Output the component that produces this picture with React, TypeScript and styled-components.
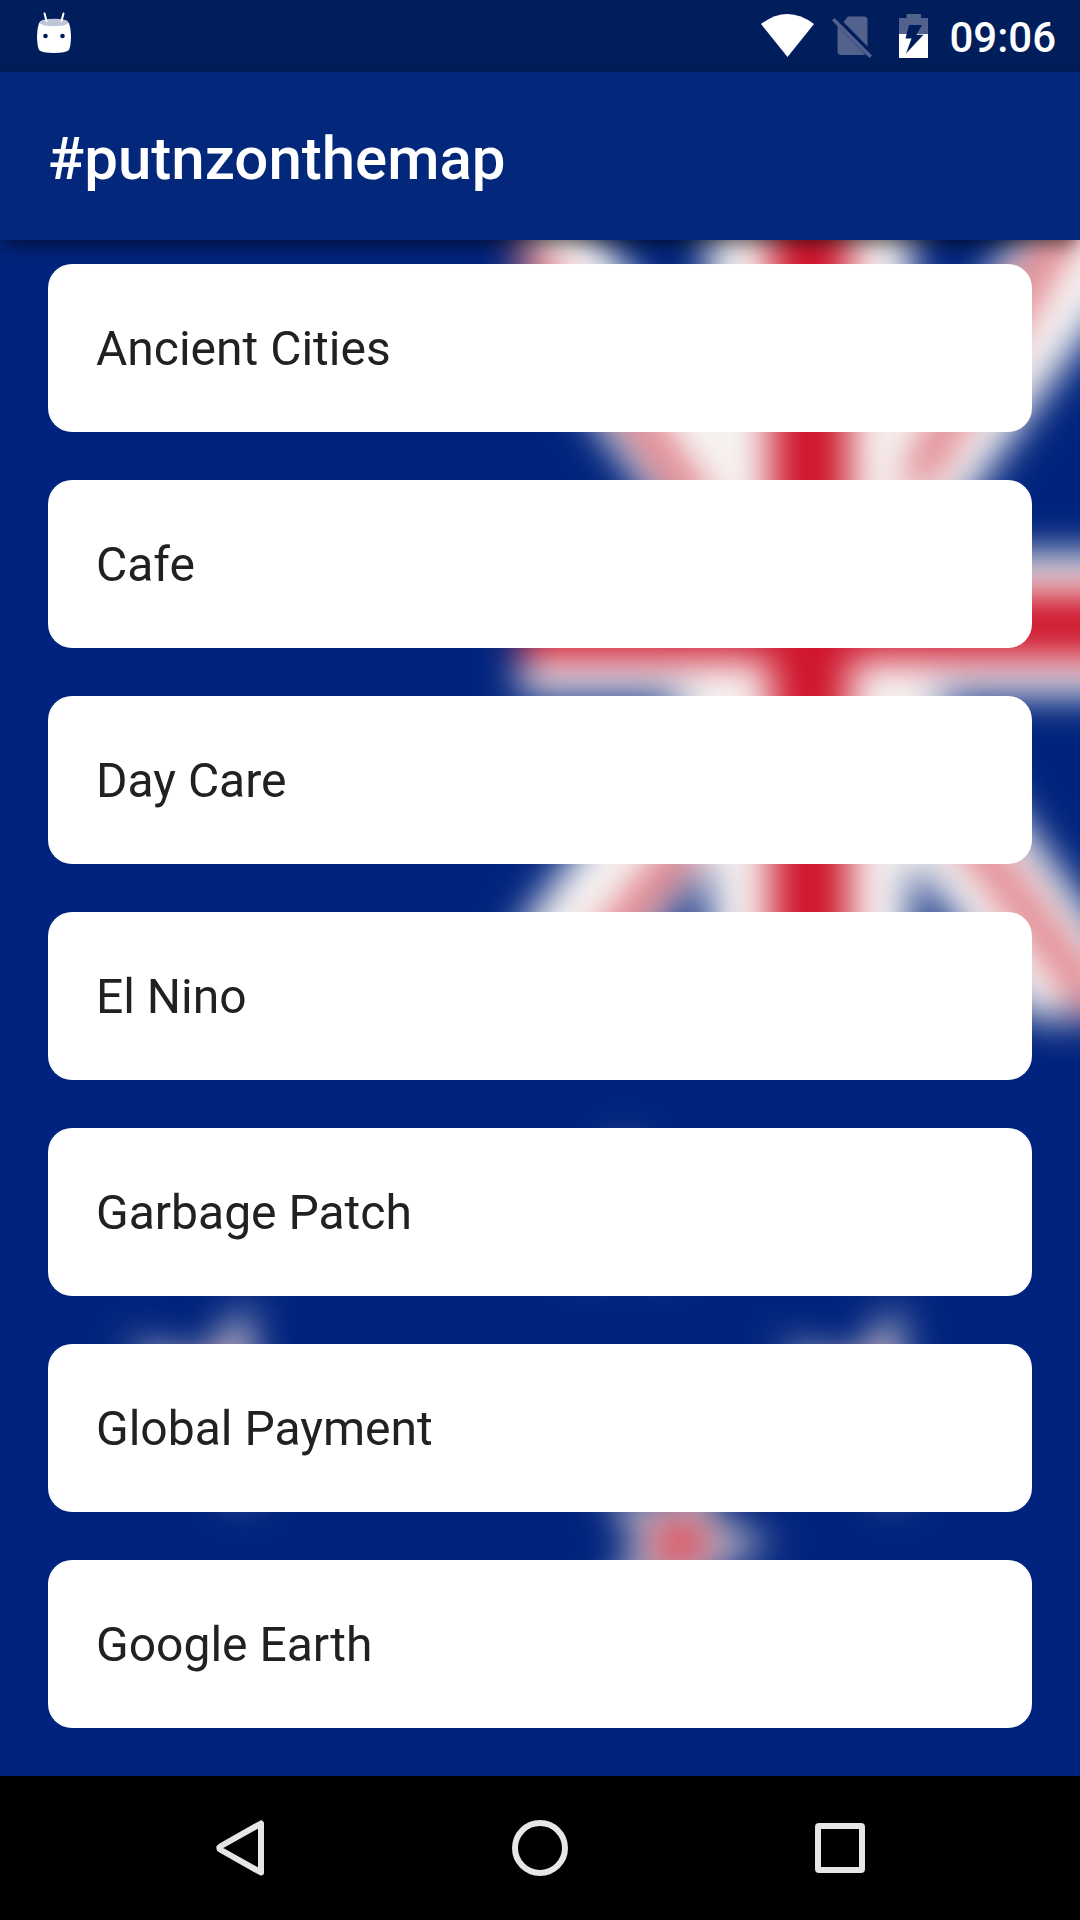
import React from "react";
import styled, { createGlobalStyle } from "styled-components";

const GlobalStyle = createGlobalStyle`
  *, *::before, *::after { box-sizing: border-box; }
  body {
    margin: 0;
    background: #00247d;
    font-family: Roboto, "Noto Sans", sans-serif;
  }
`;

const Screen = styled.div`
  display: flex;
  flex-direction: column;
  min-height: 100vh;
`;

const StatusBar = styled.div`
  display: flex;
  align-items: center;
  justify-content: space-between;
  height: 72px;
  padding: 0 24px;
  background: #001e5b;
`;

const StatusIcons = styled.div`
  display: flex;
  align-items: center;
  gap: 12px;
`;

const StatusIcon = styled.svg<{ $width: number }>`
  display: block;
  flex: none;
  width: ${(p) => p.$width}px;
  height: 72px;
`;

const Clock = styled.time`
  color: #fff;
  font-size: 42px;
  font-weight: 500;
  line-height: 48px;
  padding-top: 4px;
`;

const AppBar = styled.header`
  position: relative;
  z-index: 1;
  display: flex;
  align-items: center;
  min-height: 168px;
  padding: 6px 48px 0;
  background: #03287b;
  box-shadow: 0 8px 18px -4px rgba(0, 0, 0, 0.6);
`;

const Title = styled.h1`
  margin: 0;
  color: #fff;
  font-size: 60px;
  font-weight: 500;
  line-height: 72px;
`;

const Content = styled.main`
  position: relative;
  flex: 1;
  overflow: hidden;
`;

const Backdrop = styled.svg`
  position: absolute;
  inset: 0;
  width: 100%;
  height: 100%;
`;

const CategoryList = styled.ul`
  position: relative;
  display: flex;
  flex-direction: column;
  gap: 48px;
  margin: 0;
  padding: 24px 48px 48px;
  list-style: none;
`;

const CategoryCard = styled.button`
  display: block;
  width: 100%;
  padding: 57px 48px 55px;
  border: 0;
  border-radius: 24px;
  background: #fff;
  color: #212121;
  font-family: inherit;
  font-size: 48px;
  line-height: 56px;
  text-align: left;
  cursor: pointer;
`;

const NavBar = styled.nav`
  display: flex;
  height: 144px;
  padding: 0 90px;
  background: #000;
`;

const NavButton = styled.button`
  display: flex;
  flex: 1;
  align-items: center;
  justify-content: center;
  padding: 0;
  border: 0;
  background: transparent;
  cursor: pointer;
`;

const NavIcon = styled.svg`
  display: block;
  width: 72px;
  height: 72px;
  fill: none;
  stroke: #e6e6e6;
  stroke-width: 6;
  stroke-linejoin: round;
`;

const categories = [
  "Ancient Cities",
  "Cafe",
  "Day Care",
  "El Nino",
  "Garbage Patch",
  "Global Payment",
  "Google Earth",
];

function star(cx: number, cy: number, r: number, turn = 0) {
  return Array.from({ length: 10 }, (_, i) => {
    const radius = i % 2 ? r * 0.4 : r;
    const a = ((i * 36 - 90 + turn) * Math.PI) / 180;
    return `${cx + radius * Math.cos(a)},${cy + radius * Math.sin(a)}`;
  }).join(" ");
}

function FlagBackdrop() {
  return (
    <Backdrop viewBox="0 240 1080 1536" preserveAspectRatio="xMidYMin slice" aria-hidden="true">
      <defs>
        <filter id="soften" filterUnits="userSpaceOnUse" x="-100" y="100" width="1300" height="1800" colorInterpolationFilters="sRGB">
          <feGaussianBlur stdDeviation="19" />
        </filter>
        <clipPath id="canton">
          <rect x="520" y="180" width="665" height="838" />
        </clipPath>
      </defs>
      <rect y="240" width="1080" height="1536" fill="#00247d" />
      <g filter="url(#soften)">
        <g clipPath="url(#canton)">
          <path d="M489 176L1135 1074M1131 176L485 1074" stroke="#f8f5f4" strokeWidth="113" />
          <path d="M480 182L725 548M1100 165L890 523M690 840L510 1060M900 742L1100 1010" stroke="#d23f4c" strokeWidth="23" />
          <rect x="708" y="100" width="204" height="1000" fill="#f6f2f1" />
          <rect x="400" y="554" width="800" height="141" fill="#f6f2f1" />
          <rect x="771" y="100" width="78" height="1000" fill="#cf142b" />
          <rect x="400" y="592" width="800" height="67" fill="#cf142b" />
        </g>
        <g fill="#cf142b" stroke="#e8dcdc" strokeWidth="18">
          <polygon points={star(216, 1404, 80, 18)} />
          <polygon points={star(866, 1405, 78, 18)} />
          <polygon points={star(680, 1543, 68, 18)} />
          <polygon points={star(625, 1212, 48)} />
        </g>
      </g>
    </Backdrop>
  );
}

export default function App() {
  return (
    <>
      <GlobalStyle />
      <Screen>
        <StatusBar>
          <StatusIcon $width={60} viewBox="24 0 60 72" aria-hidden="true">
            <path d="M39 23Q54 18 69 23Q71 29 71 36Q71 45 69 50Q66 53 54 53Q42 53 39 50Q37 45 37 36Q37 29 39 23Z" fill="#fff" />
            <ellipse cx="54" cy="22.5" rx="14.5" ry="3.8" fill="#bfc5d9" />
            <path d="M44.5 13.5L46.5 21M63.5 13.5L61.5 21" stroke="#fff" strokeWidth="2" strokeLinecap="round" />
            <circle cx="45.5" cy="36" r="2.3" fill="#001e5b" />
            <circle cx="62.5" cy="36" r="2.3" fill="#001e5b" />
          </StatusIcon>
          <StatusIcons>
            <StatusIcon $width={54} viewBox="760 0 54 72" aria-hidden="true">
              <path d="M761 24Q787.500 4 814 24L787.500 57Z" fill="#fff" />
            </StatusIcon>
            <StatusIcon $width={50} viewBox="826 0 50 72" aria-hidden="true">
              <g fill="#52628d">
                <path d="M848 16.500H864Q867.500 16.500 867.500 20V46.500L843.500 22Z" />
                <path d="M837.500 26L865.500 54.500Q864 55 862 55H841Q837.500 55 837.500 51Z" />
                <path d="M834.500 18L872 55.500L869.500 58L832 20.500Z" />
              </g>
            </StatusIcon>
            <StatusIcon $width={49} viewBox="888 0 49 72" aria-hidden="true">
              <path d="M906.500 14H921V18H928V34H899V18H906.500Z" fill="#52628d" />
              <path d="M899 34H928V58H899Z" fill="#fff" />
              <path d="M909 25H922L916.500 34.800H923.500L906 53.500L911.500 38.500H905.500Z" fill="#001e5b" />
            </StatusIcon>
            <Clock>09:06</Clock>
          </StatusIcons>
        </StatusBar>

        <AppBar>
          <Title>#putnzonthemap</Title>
        </AppBar>

        <Content>
          <FlagBackdrop />
          <CategoryList>
            {categories.map((name) => (
              <li key={name}>
                <CategoryCard type="button">{name}</CategoryCard>
              </li>
            ))}
          </CategoryList>
        </Content>

        <NavBar aria-label="System">
          <NavButton type="button" aria-label="Back">
            <NavIcon viewBox="0 0 72 72">
              <path d="M57 11.500V60.500L17 38Q13.500 36 17 34Z" />
            </NavIcon>
          </NavButton>
          <NavButton type="button" aria-label="Home">
            <NavIcon viewBox="0 0 72 72">
              <circle cx="36" cy="36" r="25" />
            </NavIcon>
          </NavButton>
          <NavButton type="button" aria-label="Recent apps">
            <NavIcon viewBox="0 0 72 72">
              <rect x="14" y="14" width="44" height="44" rx="1" />
            </NavIcon>
          </NavButton>
        </NavBar>
      </Screen>
    </>
  );
}
